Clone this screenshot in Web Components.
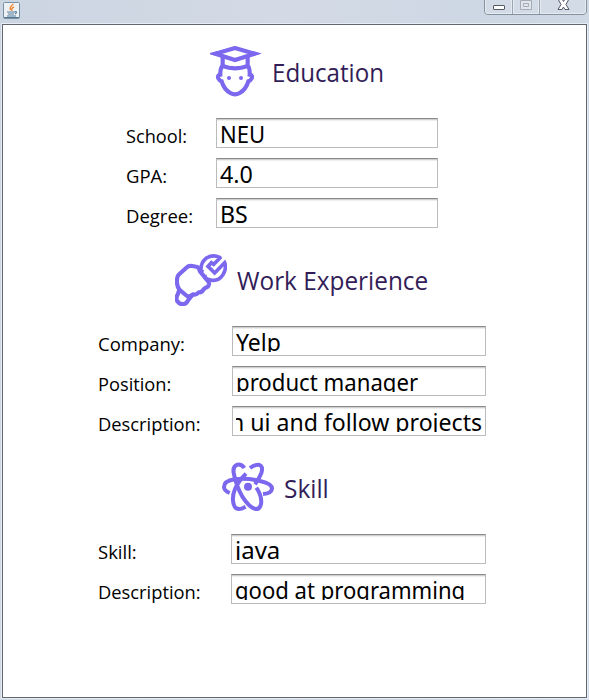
<!DOCTYPE html>
<html lang="en"><head><meta charset="utf-8"><title>Resume form</title>
<style>html,body{margin:0;height:100%;overflow:hidden;background:#d3dce7}</style></head>
<body>
<app-window>
  <form-section icon="education" heading="Education" width="112" style="--left:210px;--label-left:126px;--field-col:90px;--field-width:222px">
    <form-row label="School:" lw="61" value="NEU" vw="45"></form-row>
    <form-row label="GPA:" lw="41" value="4.0" vw="33"></form-row>
    <form-row label="Degree:" lw="67" value="BS" vw="28"></form-row>
  </form-section>
  <form-section icon="work" heading="Work Experience" width="191" style="--left:175px;--label-left:98px;--field-col:134px;--field-width:254px">
    <form-row label="Company:" lw="87" value="Yelp" vw="45"></form-row>
    <form-row label="Position:" lw="73" value="product manager" vw="182"></form-row>
    <form-row label="Description:" lw="103" value="n ui and follow projects" vw="252" end></form-row>
  </form-section>
  <form-section icon="skill" heading="Skill" width="45" style="--left:222px;--label-left:98px;--field-col:133px;--field-width:255px">
    <form-row label="Skill:" lw="39" value="java" vw="45"></form-row>
    <form-row label="Description:" lw="103" value="good at programming" vw="230"></form-row>
  </form-section>
</app-window>
<script>
const ICONS = {
education:`<svg viewBox="30 24 156 156"><g fill="none" stroke="#7b68ee" stroke-width="12.5"><path d="M46 47L105 30L164 47L105 66Z"/><path d="M68 54V84Q105 98 143 84V54M66 84Q60 95 61 110Q51 112 55 121Q59 129 65 130Q72 154 91 165Q105 173 119 165Q138 154 145 130Q151 129 155 121Q159 112 149 110Q150 95 145 84"/></g><g fill="#7b68ee"><path d="M28 47L52 39V55ZM182 47L158 39V55Z"/><circle cx="87" cy="120" r="6"/><circle cx="123" cy="120" r="6"/></g></svg>`,
work:`<svg viewBox="9 12 156 156"><g fill="none" stroke="#7b68ee" stroke-width="12.5" stroke-linejoin="round"><path d="M43 53Q50 46 61 48L76 51Q81 54 84 64L106 91Q112 97 111 103Q109 112 99 114L94 119Q90 128 80 127Q72 136 63 133Q55 141 45 138L22 119Q13 105 15 89Q15 79 20 74Z"/><path d="M22 119L17 134Q10 144 16 154Q24 165 36 162Q44 160 48 151L61 135"/><path stroke-linejoin="miter" stroke-width="11" d="M87 62Q85 39 102 25Q121 12 143 22L144 24L125 43L118 38L108 49L128 69L158 38Q165 54 153 74Q140 93 120 91Q108 90 100 84L98 75M87 62L94 66"/></g></svg>`,
skill:`<svg viewBox="36 24 156 156"><g fill="none" stroke="#7b68ee" stroke-width="12"><path d="M59 117Q42 110 42 99Q42 81 74 76Q111 71 150 81Q186 89 186 104Q184 118 159 120"/><path d="M103 42Q95 30 82 32Q66 38 72 61Q78 93 97 128Q119 162 137 165Q149 167 153 151Q157 127 139 101"/><path d="M120 42Q132 32 146 32Q161 36 154 57Q147 75 135 91"/><path d="M108 59Q85 82 75 105Q65 129 71 151Q76 169 95 164L107 158"/></g><circle cx="114" cy="98" r="12" fill="#7b68ee"/></svg>`
};
// Text condensed or widened to a set line length.
class FitText extends HTMLElement{
 connectedCallback(){
  const r=this.attachShadow({mode:'open'});
  r.innerHTML=`<style>:host{display:block;white-space:nowrap}span{display:inline-block;transform-origin:0 50%}</style><span><slot></slot></span>`;
  const s=r.querySelector('span'),w=+this.getAttribute('width');
  this.style.width=w+'px';
  s.style.transform=`scaleX(${w/s.offsetWidth})`;
 }}
class FormSection extends HTMLElement{
 connectedCallback(){
  this.attachShadow({mode:'open'}).innerHTML=`<style>
  :host{display:block}
  header{display:flex;margin-left:calc(var(--left) - 3px);height:52px;gap:10px;margin-bottom:20px}
  svg{width:52px;height:52px;display:block;flex:none}
  fit-text{font:25px/34px "Open Sans","Noto Sans",sans-serif;color:#321d58;padding-top:9px}
  .rows{display:grid;gap:10px;margin-left:calc(var(--label-left) - 3px)}
  </style><header>${ICONS[this.getAttribute('icon')]}<fit-text width="${this.getAttribute('width')}">${this.getAttribute('heading')}</fit-text></header><div class="rows"><slot></slot></div>`;
 }}
class FormRow extends HTMLElement{
 connectedCallback(){
  const a=n=>this.getAttribute(n);
  this.attachShadow({mode:'open'}).innerHTML=`<style>
  :host{display:grid;grid-template-columns:var(--field-col) var(--field-width);height:30px}
  .label{font:18.5px/26px "Open Sans","Noto Sans",sans-serif;color:#000;padding-top:5px}
  .field{box-sizing:border-box;height:30px;border:1px solid #bbb;border-top:1px solid #8b8b8b;box-shadow:inset 0 1px #cecece,inset 0 2px #eee;background:#fff;padding:3px;display:flex}
  .clip{flex:1;min-width:0;overflow:hidden;height:22px;display:flex;justify-content:${this.hasAttribute('end')?'flex-end':'flex-start'}}
  .clip fit-text{flex:none;font:24px/32px "Noto Sans","Open Sans",sans-serif;color:#000;margin-top:-4px}
  </style><fit-text class="label" width="${a('lw')}">${a('label')}</fit-text><div class="field"><div class="clip"><fit-text width="${a('vw')}">${a('value')}</fit-text></div></div>`;
 }}
class AppWindow extends HTMLElement{
 connectedCallback(){
  this.attachShadow({mode:'open'}).innerHTML=`<style>
  :host{box-sizing:border-box;display:grid;grid-template-rows:24px 674px;width:589px;height:700px;padding:0 1px 2px 2px;background:linear-gradient(100deg,#cbd5e1,#d3dae5 40%,#ccd7e3 75%,#d5deea)}
  .bar{display:flex;justify-content:space-between;align-items:flex-start}
  .java{width:17px;height:17px;margin:2px 0 0 1px}
  .controls{width:103px;height:15px;margin-right:1px}
  svg{display:block}
  main{box-sizing:border-box;width:585px;height:674px;border:1px solid #62676e;background:#fff;box-shadow:0 0 0 1px #e7edf4;padding-top:21px;display:flex;flex-direction:column;gap:26px}
  </style><div class="bar">
  <svg class="java" viewBox="0 0 17 17"><rect x=".5" y=".5" width="16" height="16" rx="1" fill="#eef1f4" stroke="#7890a5"/><path d="M1 15.5h15" stroke="#557894"/><path d="M10.5 2Q6 5 7.5 8M11 5Q8 6 9 9" fill="none" stroke="#ed8736" stroke-width="1.4"/><path d="M4 10H12M5 12H11M4 14H13M12 9.5Q15 9.5 12 12" fill="none" stroke="#527a99" stroke-width="1.2"/></svg>
  <svg class="controls" viewBox="0 0 103 15"><path d="M.5-1V11Q.5 14.5 4 14.5H98Q102.5 14.5 102.5 11V-1" fill="#d3dce6" stroke="#85919e"/><path d="M28.5 0V14M55.5 0V14" stroke="#9ba5b0"/><path d="M1.5 0V11Q1.5 13.5 4 13.5H27.5V0M29.5 0V13.5H54.5V0M56.5 0V13.5H98Q101.5 13.5 101.5 11V0" fill="none" stroke="#e5ebf1"/><rect x="9.5" y="5.5" width="11" height="4" rx=".5" fill="#fff" stroke="#555963"/><path d="M36.5.5H47.5V9.5H36.5ZM39.5 3.5H44.5V6.5H39.5Z" fill="#e2e6eb" stroke="#a4acb5"/><path d="M74-1H78L79.5 1.5L81-1H85L82 4.5L85 9.5H81L79.5 7L78 9.5H74L77 4.5Z" fill="#fff" stroke="#555963"/></svg>
  </div><main><slot></slot></main>`;
 }}
customElements.define('fit-text',FitText);
customElements.define('form-section',FormSection);
customElements.define('form-row',FormRow);
customElements.define('app-window',AppWindow);
</script></body></html>
